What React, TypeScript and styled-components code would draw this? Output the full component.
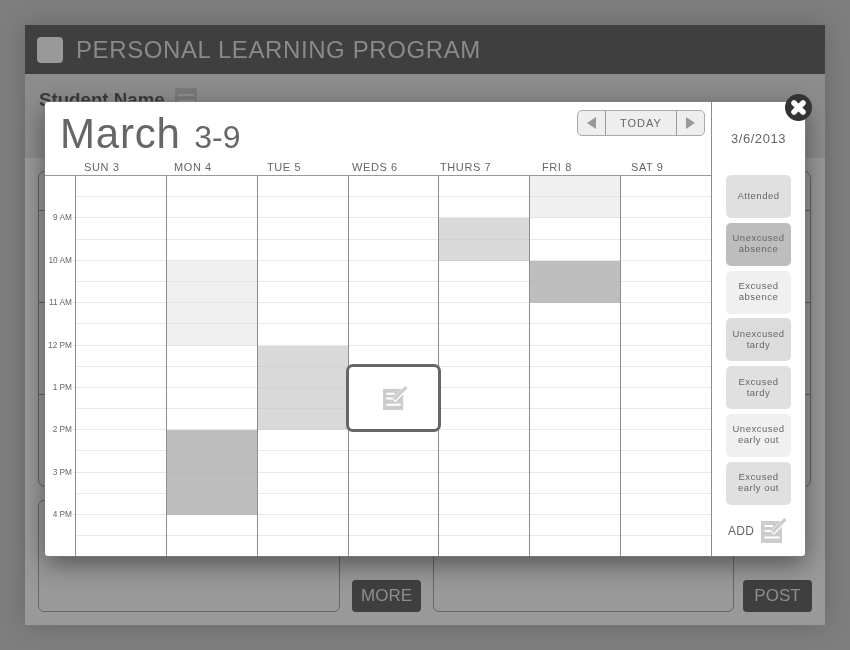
import { createGlobalStyle, styled } from "styled-components";

const GlobalStyle = createGlobalStyle`
    html, body {
        margin: 0;
        padding: 0;
        background-color: #7a7a7a;
        font-family: "Liberation Sans", Arial, sans-serif;
    }
    * {
        box-sizing: border-box;
    }
`;

const Page = styled.div`
    position: relative;
    width: 850px;
    height: 650px;
    padding: 25px;
    overflow: hidden;
    background-color: #7e7e7e;
    filter: grayscale(1);
`;

//dimmed page behind the popup
const Card = styled.div`
    width: 800px;
    height: 600px;
    background-color: #999;
    box-shadow: 0 0 24px rgba(0, 0, 0, 0.18);
`;

const TopBar = styled.header`
    display: flex;
    align-items: center;
    gap: 13px;
    height: 49px;
    padding-left: 12px;
    background-color: #3f3f3f;
`;

const LogoSquare = styled.div`
    width: 26px;
    height: 26px;
    border-radius: 4px;
    background-color: #999;
`;

const TopTitle = styled.h1`
    margin: 0;
    font-size: 24px;
    font-weight: normal;
    letter-spacing: 0.6px;
    color: #8a8a8a;
`;

const StudentBar = styled.div`
    display: flex;
    align-items: flex-start;
    gap: 10px;
    height: 84px;
    padding: 14px 0 0 14px;
    background-color: #8c8c8c;
`;

const StudentName = styled.div`
    font-size: 18.7px;
    line-height: 24px;
    font-weight: bold;
    color: #3b3b3b;
`;

const Content = styled.div`
    display: flex;
    flex-direction: column;
    gap: 13px;
    padding: 13px 13px 0;
`;

const BackPanel = styled.div`
    display: flex;
    flex-direction: column;
    height: 316px;
    width: 773px;
    border: 1px solid #5f5f5f;
    border-radius: 7px;
`;

const BackRow = styled.div<{ $height: number }>`
    height: ${(p) => p.$height}px;
    border-bottom: 1px solid #5f5f5f;

    &:last-child {
        border-bottom: none;
    }
`;

const BottomRow = styled.div`
    display: flex;
    align-items: flex-end;
    height: 112px;
    width: 774px;
`;

const NoteBox = styled.div<{ $width: number }>`
    width: ${(p) => p.$width}px;
    height: 112px;
    border: 1px solid #666;
    border-radius: 6px;
`;

const DarkButton = styled.div<{ $width: number; $before: number; $after: number }>`
    width: ${(p) => p.$width}px;
    height: 32px;
    margin: 0 ${(p) => p.$after}px 0 ${(p) => p.$before}px;
    border-radius: 4px;
    background-color: #3f3f3f;
    color: #8e8e8e;
    font-size: 17px;
    line-height: 32px;
    text-align: center;
`;

//the popup
const Modal = styled.div`
    position: absolute;
    left: 45px;
    top: 102px;
    display: flex;
    width: 760px;
    height: 454px;
    border-radius: 3px;
    background-color: white;
    box-shadow: 0 0 0 1px rgba(130, 130, 130, 0.5), 0 8px 26px rgba(0, 0, 0, 0.45);
`;

const CloseButton = styled.div`
    position: absolute;
    top: -8px;
    right: -7px;
    width: 27px;
    height: 27px;
    border-radius: 50%;
    background-color: #333;
`;

const CalendarPane = styled.div`
    display: flex;
    flex-direction: column;
    width: 666px;
    height: 454px;
`;

const PaneHead = styled.div`
    display: flex;
    justify-content: space-between;
    align-items: flex-start;
    height: 55px;
    padding: 8px 6px 0 15px;
`;

const MonthTitle = styled.div`
    font-size: 42px;
    line-height: 47px;
    letter-spacing: 0.8px;
    color: #666;
`;

const WeekRange = styled.span`
    margin-left: 1px;
    font-size: 32px;
    letter-spacing: 0;
`;

const Pager = styled.div`
    display: flex;
    width: 128px;
    height: 26px;
    border: 1px solid #aaa;
    border-radius: 5px;
    background-color: #eee;
`;

const PagerArrow = styled.div`
    display: flex;
    align-items: center;
    justify-content: center;
    width: 27px;
`;

const PagerToday = styled.div`
    flex: 1;
    border-left: 1px solid #999;
    border-right: 1px solid #999;
    font-size: 11px;
    line-height: 25px;
    letter-spacing: 1px;
    text-align: center;
    color: #666;
`;

const Triangle = styled.div<{ $left?: boolean }>`
    width: 0;
    height: 0;
    border-top: 6px solid transparent;
    border-bottom: 6px solid transparent;
    border-${(p) => (p.$left ? "right" : "left")}: 9px solid #999;
`;

const DayHeader = styled.div`
    display: grid;
    grid-template-columns: 30px 91px 91px 91px 90px 91px 91px 91px;
    height: 19px;
    padding-top: 2px;
    border-bottom: 1px solid #999;
`;

const DayName = styled.div<{ $inset: number }>`
    padding-left: ${(p) => p.$inset}px;
    font-size: 11px;
    line-height: 16px;
    letter-spacing: 0.6px;
    color: #666;
`;

const WeekGrid = styled.div`
    display: grid;
    grid-template-columns: 30px 91px 91px 91px 90px 91px 91px 91px;
    height: 380px;
    overflow: hidden;
`;

const TimeColumn = styled.div`
    display: flex;
    flex-direction: column;
`;

const TimeSlot = styled.div`
    flex: none;
    display: flex;
    justify-content: flex-end;
    align-items: flex-end;
    height: 21.2px;
    padding-right: 3px;
`;

const TimeLabel = styled.span`
    margin-bottom: -4px;
    font-size: 8.3px;
    line-height: 10px;
    color: #666;
`;

const TimeTick = styled.div`
    width: 2px;
    height: 1px;
    margin: 0 -3px 0 1px;
    background-color: #e8e8e8;
`;

const DayColumn = styled.div`
    position: relative;
    display: flex;
    flex-direction: column;
    border-left: 1px solid #8c8c8c;
`;

type Tone = "none" | "light" | "mid" | "dark";

const toneFill: Record<Tone, string> = {
    none: "white",
    light: "#f0f0f0",
    mid: "#d9d9d9",
    dark: "#bebebe",
};

const toneLine: Record<Tone, string> = {
    none: "#e8e8e8",
    light: "#e6e6e6",
    mid: "#d2d2d2",
    dark: "#bababa",
};

const Slot = styled.div<{ $tone: Tone }>`
    flex: none;
    height: 21.2px;
    background-color: ${(p) => toneFill[p.$tone]};
    border-bottom: 1px solid ${(p) => toneLine[p.$tone]};
`;

const SelectedCell = styled.div`
    position: absolute;
    left: -3px;
    top: 188px;
    z-index: 1;
    display: flex;
    align-items: center;
    justify-content: center;
    width: 95px;
    height: 68px;
    padding-left: 2px;
    border: 3px solid #666;
    border-radius: 7px;
    background-color: white;
`;

const SidePane = styled.aside`
    display: flex;
    flex-direction: column;
    align-items: center;
    width: 94px;
    border-left: 1px solid #8c8c8c;
`;

const DateLabel = styled.div`
    height: 73px;
    padding-top: 29px;
    font-size: 13px;
    line-height: 16px;
    letter-spacing: 0.55px;
    color: #666;
`;

const StatusList = styled.div`
    display: flex;
    flex-direction: column;
    gap: 4.8px;
`;

const StatusButton = styled.div<{ $fill: string }>`
    display: flex;
    align-items: center;
    justify-content: center;
    width: 65px;
    height: 43px;
    padding-bottom: 2px;
    border-radius: 5px;
    background-color: ${(p) => p.$fill};
    font-size: 9.5px;
    line-height: 11px;
    letter-spacing: 0.5px;
    text-align: center;
    color: #666;
`;

const AddRow = styled.div`
    display: flex;
    align-items: center;
    align-self: flex-start;
    gap: 7px;
    margin-top: 13px;
    padding-left: 16px;
    font-size: 12px;
    letter-spacing: 0.3px;
    color: #666;
`;

const AddLabel = styled.span`
    margin-top: 2px;
`;

function NoteIcon({ size }: { size: number }) {
    return (
        <svg width={size} height={size} viewBox="0 0 25 25">
            <rect x="0" y="3" width="21" height="22" fill="#ccc" />
            <path d="M3.5 8H12M3.5 13H9.5M3.5 19.5H18.5" stroke="white" strokeWidth="2" fill="none" />
            <path d="M11 15L25 1.5" stroke="white" strokeWidth="5" fill="none" />
            <path d="M11.5 14L24.5 1" stroke="#ccc" strokeWidth="3.2" fill="none" />
        </svg>
    );
}

const days = [
    { name: "SUN 3", inset: 9, events: [] },
    { name: "MON 4", inset: 8, events: [{ from: 4, to: 8, tone: "light" }, { from: 12, to: 16, tone: "dark" }] },
    { name: "TUE 5", inset: 10, events: [{ from: 8, to: 12, tone: "mid" }] },
    { name: "WEDS 6", inset: 4, events: [] },
    { name: "THURS 7", inset: 2, events: [{ from: 2, to: 4, tone: "mid" }] },
    { name: "FRI 8", inset: 13, events: [{ from: 0, to: 2, tone: "light" }, { from: 4, to: 6, tone: "dark" }] },
    { name: "SAT 9", inset: 11, events: [] },
];

const hours = ["", "9 AM", "", "10 AM", "", "11 AM", "", "12 PM", "", "1 PM", "", "2 PM", "", "3 PM", "", "4 PM", "", ""];

const statuses = [
    { top: "Attended", bottom: "", fill: "#e0e0e0" },
    { top: "Unexcused", bottom: "absence", fill: "#bdbdbd" },
    { top: "Excused", bottom: "absence", fill: "#f0f0f0" },
    { top: "Unexcused", bottom: "tardy", fill: "#dcdcdc" },
    { top: "Excused", bottom: "tardy", fill: "#e0e0e0" },
    { top: "Unexcused", bottom: "early out", fill: "#f0f0f0" },
    { top: "Excused", bottom: "early out", fill: "#e0e0e0" },
];

function toneFor(events: { from: number; to: number; tone: string }[], slot: number): Tone {
    const hit = events.find((e) => slot >= e.from && slot < e.to);
    return hit ? (hit.tone as Tone) : "none";
}

export default function App() {
    return (
        <Page>
            <GlobalStyle />
            <Card>
                <TopBar>
                    <LogoSquare />
                    <TopTitle>PERSONAL LEARNING PROGRAM</TopTitle>
                </TopBar>
                <StudentBar>
                    <StudentName>Student Name</StudentName>
                    <svg width="22" height="22" viewBox="0 0 22 22">
                        <rect width="22" height="22" rx="1" fill="#7a7a7a" />
                        <path d="M3 7H19M3 13H19" stroke="#8f8f8f" strokeWidth="2" />
                    </svg>
                </StudentBar>
                <Content>
                    <BackPanel>
                        <BackRow $height={39} />
                        <BackRow $height={92} />
                        <BackRow $height={92} />
                        <BackRow $height={91} />
                    </BackPanel>
                    <BottomRow>
                        <NoteBox $width={302} />
                        <DarkButton $width={69} $before={12} $after={12}>MORE</DarkButton>
                        <NoteBox $width={301} />
                        <DarkButton $width={69} $before={9} $after={0}>POST</DarkButton>
                    </BottomRow>
                </Content>
            </Card>

            <Modal>
                <CalendarPane>
                    <PaneHead>
                        <MonthTitle>March <WeekRange>3-9</WeekRange></MonthTitle>
                        <Pager>
                            <PagerArrow><Triangle $left /></PagerArrow>
                            <PagerToday>TODAY</PagerToday>
                            <PagerArrow><Triangle /></PagerArrow>
                        </Pager>
                    </PaneHead>
                    <DayHeader>
                        <div />
                        {days.map((d) => (
                            <DayName key={d.name} $inset={d.inset}>{d.name}</DayName>
                        ))}
                    </DayHeader>
                    <WeekGrid>
                        <TimeColumn>
                            {hours.map((h, i) => (
                                <TimeSlot key={i}>
                                    {h && <TimeLabel>{h}</TimeLabel>}
                                    {h && <TimeTick />}
                                </TimeSlot>
                            ))}
                        </TimeColumn>
                        {days.map((d) => (
                            <DayColumn key={d.name}>
                                {hours.map((_, i) => (
                                    <Slot key={i} $tone={toneFor(d.events, i)} />
                                ))}
                                {d.name === "WEDS 6" && (
                                    <SelectedCell>
                                        <NoteIcon size={24} />
                                    </SelectedCell>
                                )}
                            </DayColumn>
                        ))}
                    </WeekGrid>
                </CalendarPane>
                <SidePane>
                    <DateLabel>3/6/2013</DateLabel>
                    <StatusList>
                        {statuses.map((s, i) => (
                            <StatusButton key={i} $fill={s.fill}>
                                <div>
                                    {s.top}
                                    {s.bottom && <br />}
                                    {s.bottom}
                                </div>
                            </StatusButton>
                        ))}
                    </StatusList>
                    <AddRow>
                        <AddLabel>ADD</AddLabel>
                        <NoteIcon size={25} />
                    </AddRow>
                </SidePane>
                <CloseButton>
                    <svg width="27" height="27" viewBox="0 0 27 27">
                        <path d="M9 9L18 18M18 9L9 18" stroke="white" strokeWidth="5.5" strokeLinecap="round" />
                    </svg>
                </CloseButton>
            </Modal>
        </Page>
    );
}
